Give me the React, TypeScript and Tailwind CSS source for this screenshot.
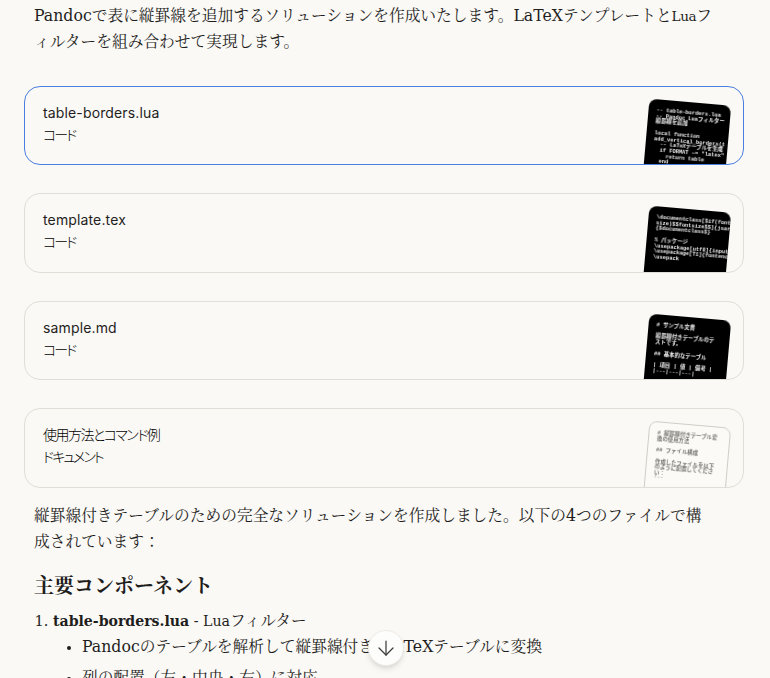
import React from 'react';
import { ArrowDown } from 'lucide-react';

const serif = "font-['DejaVu_Serif','Noto_Serif_CJK_JP','Noto_Sans_CJK_JP',serif]";
const sans = "font-['Inter','Noto_Sans_CJK_JP',sans-serif]";

const files = [
    {
        name: 'table-borders.lua',
        kind: 'コード',
        dark: true,
        lines: ['-- table-borders.lua', '-- Pandoc Luaフィルター', '縦罫線を追加', '', 'local function', 'add_vertical_borders(t', '  -- LaTeXテーブルを生成', '  if FORMAT ~= "latex"', '    return table', '  end'],
        selected: true,
    },
    {
        name: 'template.tex',
        kind: 'コード',
        dark: true,
        lines: ['\\documentclass[$if(font', 'size)$$fontsize$$]{jsart', '{$documentclass$}', '', '% パッケージ', '\\usepackage[utf8]{input', '\\usepackage[T1]{fontenc', '\\usepack'],
    },
    {
        name: 'sample.md',
        kind: 'コード',
        dark: true,
        lines: ['# サンプル文書', '', '縦罫線付きテーブルのテ', 'ストです。', '', '## 基本的なテーブル', '', '| 項目 | 値 | 備考 |', '|---|---|---|'],
    },
    {
        name: '使用方法とコマンド例',
        kind: 'ドキュメント',
        dark: false,
        japaneseName: true,
        lines: ['# 縦罫線付きテーブル変', '換の使用方法', '', '## ファイル構成', '', '作成したファイルを以下', 'のように配置してくださ', 'い：', '```'],
    },
];

const FileCard: React.FC<{ file: (typeof files)[number] }> = ({ file }) => (
    <div className={`flex h-[79.5px] justify-between overflow-hidden rounded-2xl border ${file.selected ? 'border-[#4a7ee0]' : 'border-[#e0ded6]'}`}>
        <div className={`pl-[18px] pt-[15px] text-[14px] leading-[22px] text-black [font-feature-settings:'palt'] ${sans}`}>
            <div className={file.japaneseName ? 'font-light tracking-[-0.11em]' : 'tracking-[0.01em] text-[#1f1e1d]'}>{file.name}</div>
            <div className="font-light tracking-[-0.14em]">{file.kind}</div>
        </div>
        <div
            className={`mr-[16px] mt-[15px] h-[100px] w-[82px] shrink-0 rotate-[5deg] overflow-hidden whitespace-pre rounded-lg px-[8px] pt-[9px] font-['Liberation_Mono','Noto_Sans_CJK_JP',monospace] text-[5.4px] font-bold leading-[5.7px] blur-[0.35px] ${file.dark ? 'bg-black text-[#eeeeee]' : 'border border-[#cfcdc5] bg-[#fbfaf7] text-[#77756f]'}`}
        >
            {file.lines.join('\n')}
        </div>
    </div>
);

export default function App() {
    return (
        <div className={`relative h-[678px] overflow-hidden bg-[#faf9f5] text-[15.72px] leading-[26px] text-[#1f1e1d] ${serif}`}>
            <div className="pl-[24px] pr-[26px] pt-[3px]">
                <p className="w-[690px] pl-[10px] [line-break:anywhere]">
                    Pandocで表に縦罫線を追加するソリューションを作成いたします。LaTeXテンプレートと
                    <span className="text-[13.6px] tracking-[-0.03em]">Lua</span>フィルターを組み合わせて実現します。
                </p>
                <div className="mt-[30.6px] flex flex-col gap-[28px]">
                    {files.map(file => (
                        <FileCard key={file.name} file={file} />
                    ))}
                </div>
                <p className="mt-[15px] w-[690px] pl-[10px]">
                    縦罫線付きテーブルのための完全なソリューションを作成しました。以下の4つのファイルで構成されています：
                </p>
                <h2 className="mt-[17.4px] px-[10px] text-[20px] font-bold leading-[28px]">主要コンポーネント</h2>
                <ol className="mt-[8px] list-decimal pl-[29px] marker:text-[14.5px]">
                    <li>
                        <strong className="text-[14.1px] font-bold">table-borders.lua</strong>
                        <span className="text-[14.2px]"> - Lua</span>フィルター
                        <ul className="list-disc pl-[29px]">
                            <li>
                                Pandocのテーブルを解析して縦罫線付き<span className="tracking-[-6px]">の</span>LaTeXテーブルに変換
                            </li>
                            <li className="mt-[5px]">列の配置（左・中央・右）に対応</li>
                        </ul>
                    </li>
                </ol>
            </div>
            <button className="absolute left-[368px] top-[630px] flex h-[36px] w-[36px] items-center justify-center rounded-full border border-[#eeece6] bg-[#fdfdfb] shadow-md">
                <ArrowDown size={24} strokeWidth={1.25} className="text-[#3d3d3a]" />
            </button>
        </div>
    );
}
